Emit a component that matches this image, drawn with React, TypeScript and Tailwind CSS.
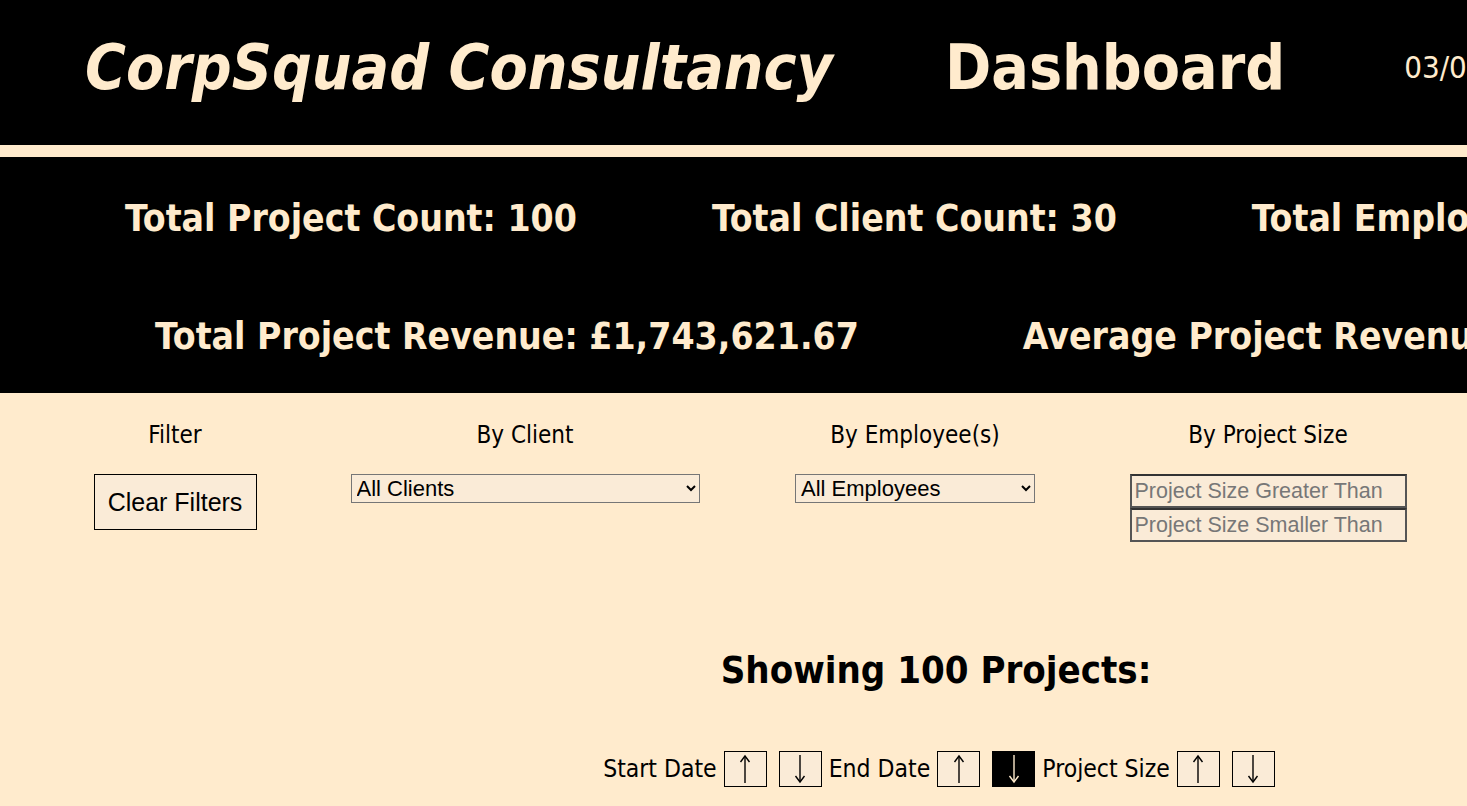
import React from 'react';

const tahoma = "font-['DejaVu_Sans_Condensed','DejaVu_Sans',sans-serif]";
const arial = "font-['Liberation_Sans',Arial,sans-serif]";

const Arrow = ({ dir }: { dir: 'up' | 'down' }) => (
  <svg width="14" height="30" viewBox="0 0 14 30" fill="none" stroke="currentColor" strokeWidth="1.4">
    {dir === 'up' ? (
      <>
        <path d="M7 2 V29" />
        <path d="M2.5 8 L7 2 L11.5 8" />
      </>
    ) : (
      <>
        <path d="M7 1 V28" />
        <path d="M2.5 22 L7 28 L11.5 22" />
      </>
    )}
  </svg>
);

const SortButton = ({ dir, active = false }: { dir: 'up' | 'down'; active?: boolean }) => (
  <button
    className={`w-[43px] h-[36px] border border-black flex items-center justify-center ${
      active ? 'bg-black text-[#ffebcd]' : 'bg-[#faebd7] text-black'
    }`}
  >
    <Arrow dir={dir} />
  </button>
);

const App = () => {
  return (
    <div className={`w-[1467px] h-[806px] overflow-hidden bg-[#ffebcd] ${tahoma}`}>
      {/* Header */}
      <header className="h-[145px] pb-[10px] bg-black flex items-center text-[#ffebcd] whitespace-nowrap">
        <h1 className="ml-[85px] text-[62px] font-bold italic">CorpSquad Consultancy</h1>
        <h1 className="ml-[112px] text-[62px] font-bold">Dashboard</h1>
        <span className="ml-[119px] text-[31px]">03/04/2024</span>
      </header>
      <div className="h-[12px]" />

      {/* Stats */}
      <section className="h-[236px] pt-[34px] bg-black text-[#ffebcd] font-bold text-[37px] whitespace-nowrap flex flex-col gap-[63px]">
        <div className="flex items-center pl-[125px] gap-[135px] leading-[55px]">
          <span>Total Project Count: 100</span>
          <span>Total Client Count: 30</span>
          <span>Total Employee Count: 50</span>
        </div>
        <div className="flex items-center pl-[155px] gap-[164px] leading-[55px]">
          <span>Total Project Revenue: £1,743,621.67</span>
          <span>Average Project Revenue: £17,436.22</span>
        </div>
      </section>

      {/* Filters */}
      <section className="flex pt-[24px] text-[24px] leading-[36px] text-black">
        <div className="w-[350px] flex flex-col items-center">
          <span>Filter</span>
          <button className={`mt-[21px] w-[163px] h-[56px] border border-black bg-[#faebd7] text-[25px] ${arial}`}>
            Clear Filters
          </button>
        </div>
        <div className="w-[350px] flex flex-col items-center">
          <span>By Client</span>
          <select className={`mt-[21px] w-[349px] h-[29px] border border-[#767676] bg-[#faebd7] text-[22px] leading-normal px-[1px] ${arial}`}>
            <option>All Clients</option>
          </select>
        </div>
        <div className="ml-[40px] w-[350px] flex flex-col items-center">
          <span>By Employee(s)</span>
          <select className={`mt-[21px] w-[240px] h-[29px] border border-[#767676] bg-[#faebd7] text-[22px] leading-normal px-[1px] ${arial}`}>
            <option>All Employees</option>
          </select>
        </div>
        <div className="ml-[3px] w-[350px] flex flex-col items-center">
          <span>By Project Size</span>
          <input
            className={`mt-[21px] w-[277px] h-[34px] border-2 border-[#555] border-t-[#333] bg-[#faebd7] text-[21.5px] leading-normal px-[3px] placeholder:text-[#777] ${arial}`}
            placeholder="Project Size Greater Than"
          />
          <input
            className={`w-[277px] h-[34px] border-2 border-[#555] border-t-[#333] bg-[#faebd7] text-[21.5px] leading-normal px-[3px] placeholder:text-[#777] ${arial}`}
            placeholder="Project Size Smaller Than"
          />
        </div>
      </section>

      {/* Listing */}
      <section className="mt-[100px] flex flex-col items-center pl-[405px]">
        <h2 className="text-[38px] font-bold">Showing 100 Projects:</h2>
        <div className="mt-[52px] ml-[6px] flex items-center text-[24.5px] whitespace-nowrap">
          <span className="mr-[7px]">Start Date</span>
          <SortButton dir="up" />
          <span className="w-[12px]" />
          <SortButton dir="down" />
          <span className="mx-[7px]">End Date</span>
          <SortButton dir="up" />
          <span className="w-[12px]" />
          <SortButton dir="down" active />
          <span className="mx-[7px]">Project Size</span>
          <SortButton dir="up" />
          <span className="w-[12px]" />
          <SortButton dir="down" />
        </div>
      </section>
    </div>
  );
};

export default App;
